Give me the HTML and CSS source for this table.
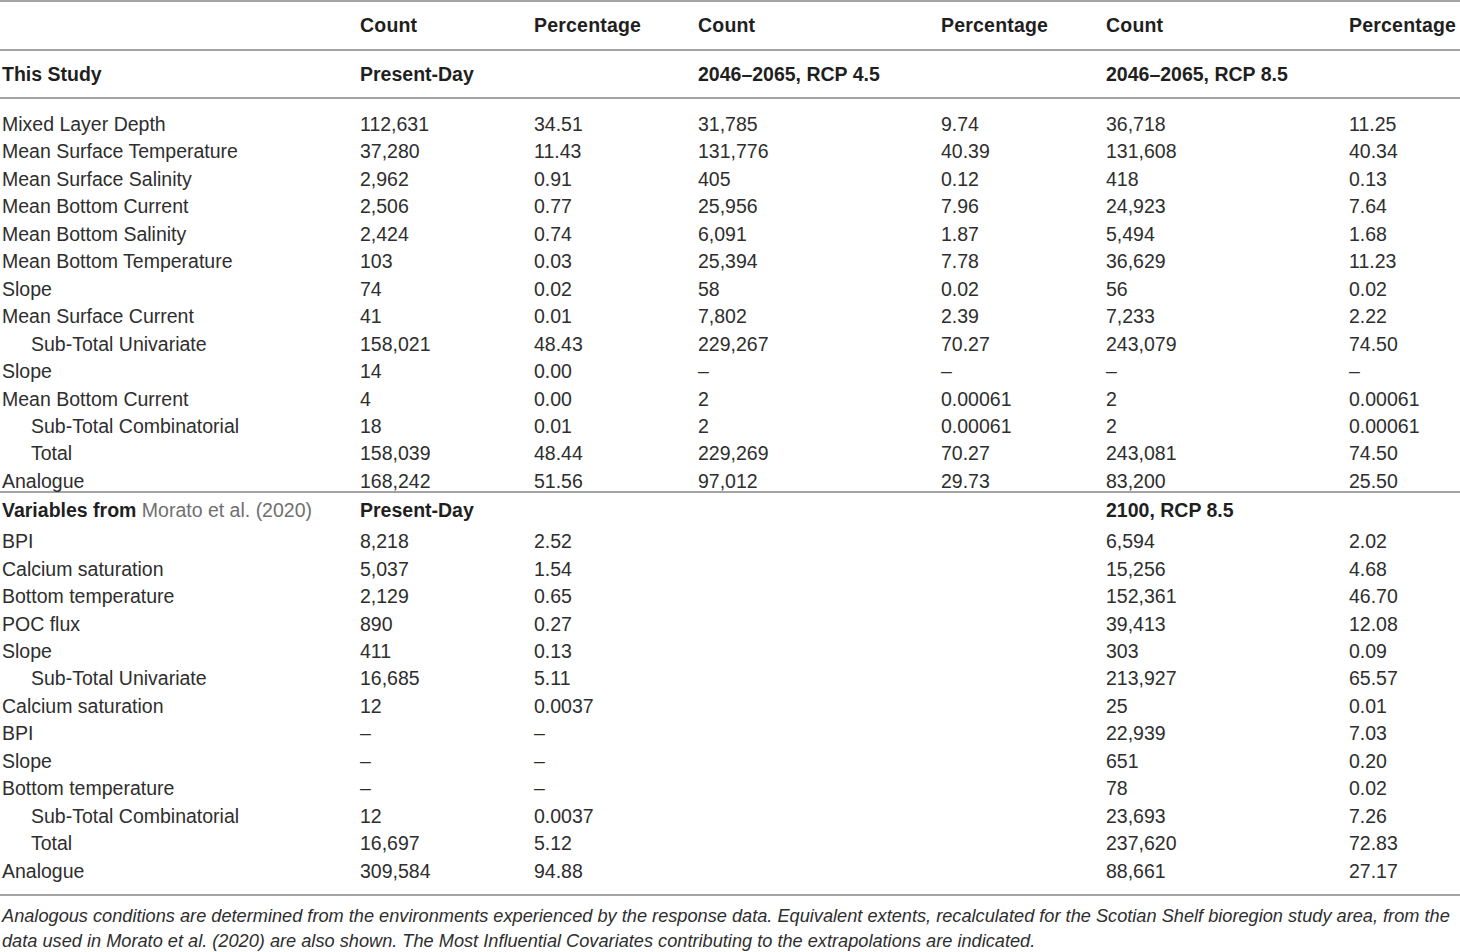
FILE: index.html
```html
<!DOCTYPE html>
<html lang="en">
<head>
<meta charset="utf-8">
<title>Extrapolation table</title>
<link rel="stylesheet" href="styles.css">
</head>
<body>
<table class="tbl">
  <colgroup>
    <col class="c0"><col class="c1"><col class="c2"><col class="c3"><col class="c4"><col class="c5"><col class="c6">
  </colgroup>
  <thead>
    <tr class="h1">
      <th></th><th>Count</th><th>Percentage</th><th>Count</th><th>Percentage</th><th>Count</th><th>Percentage</th>
    </tr>
    <tr class="h2">
      <th>This Study</th><th>Present-Day</th><th></th><th>2046–2065, RCP 4.5</th><th></th><th>2046–2065, RCP 8.5</th><th></th>
    </tr>
  </thead>
  <tbody class="sec1">
    <tr class="first"><td>Mixed Layer Depth</td><td>112,631</td><td>34.51</td><td>31,785</td><td>9.74</td><td>36,718</td><td>11.25</td></tr>
    <tr><td>Mean Surface Temperature</td><td>37,280</td><td>11.43</td><td>131,776</td><td>40.39</td><td>131,608</td><td>40.34</td></tr>
    <tr><td>Mean Surface Salinity</td><td>2,962</td><td>0.91</td><td>405</td><td>0.12</td><td>418</td><td>0.13</td></tr>
    <tr><td>Mean Bottom Current</td><td>2,506</td><td>0.77</td><td>25,956</td><td>7.96</td><td>24,923</td><td>7.64</td></tr>
    <tr><td>Mean Bottom Salinity</td><td>2,424</td><td>0.74</td><td>6,091</td><td>1.87</td><td>5,494</td><td>1.68</td></tr>
    <tr><td>Mean Bottom Temperature</td><td>103</td><td>0.03</td><td>25,394</td><td>7.78</td><td>36,629</td><td>11.23</td></tr>
    <tr><td>Slope</td><td>74</td><td>0.02</td><td>58</td><td>0.02</td><td>56</td><td>0.02</td></tr>
    <tr><td>Mean Surface Current</td><td>41</td><td>0.01</td><td>7,802</td><td>2.39</td><td>7,233</td><td>2.22</td></tr>
    <tr><td class="ind">Sub-Total Univariate</td><td>158,021</td><td>48.43</td><td>229,267</td><td>70.27</td><td>243,079</td><td>74.50</td></tr>
    <tr><td>Slope</td><td>14</td><td>0.00</td><td>–</td><td>–</td><td>–</td><td>–</td></tr>
    <tr><td>Mean Bottom Current</td><td>4</td><td>0.00</td><td>2</td><td>0.00061</td><td>2</td><td>0.00061</td></tr>
    <tr><td class="ind">Sub-Total Combinatorial</td><td>18</td><td>0.01</td><td>2</td><td>0.00061</td><td>2</td><td>0.00061</td></tr>
    <tr><td class="ind">Total</td><td>158,039</td><td>48.44</td><td>229,269</td><td>70.27</td><td>243,081</td><td>74.50</td></tr>
    <tr class="last"><td>Analogue</td><td>168,242</td><td>51.56</td><td>97,012</td><td>29.73</td><td>83,200</td><td>25.50</td></tr>
  </tbody>
  <tbody class="sec2">
    <tr class="sub"><th>Variables from <a class="ref" href="#">Morato et al. (2020)</a></th><th>Present-Day</th><th></th><th></th><th></th><th>2100, RCP 8.5</th><th></th></tr>
    <tr><td>BPI</td><td>8,218</td><td>2.52</td><td></td><td></td><td>6,594</td><td>2.02</td></tr>
    <tr><td>Calcium saturation</td><td>5,037</td><td>1.54</td><td></td><td></td><td>15,256</td><td>4.68</td></tr>
    <tr><td>Bottom temperature</td><td>2,129</td><td>0.65</td><td></td><td></td><td>152,361</td><td>46.70</td></tr>
    <tr><td>POC flux</td><td>890</td><td>0.27</td><td></td><td></td><td>39,413</td><td>12.08</td></tr>
    <tr><td>Slope</td><td>411</td><td>0.13</td><td></td><td></td><td>303</td><td>0.09</td></tr>
    <tr><td class="ind">Sub-Total Univariate</td><td>16,685</td><td>5.11</td><td></td><td></td><td>213,927</td><td>65.57</td></tr>
    <tr><td>Calcium saturation</td><td>12</td><td>0.0037</td><td></td><td></td><td>25</td><td>0.01</td></tr>
    <tr><td>BPI</td><td>–</td><td>–</td><td></td><td></td><td>22,939</td><td>7.03</td></tr>
    <tr><td>Slope</td><td>–</td><td>–</td><td></td><td></td><td>651</td><td>0.20</td></tr>
    <tr><td>Bottom temperature</td><td>–</td><td>–</td><td></td><td></td><td>78</td><td>0.02</td></tr>
    <tr><td class="ind">Sub-Total Combinatorial</td><td>12</td><td>0.0037</td><td></td><td></td><td>23,693</td><td>7.26</td></tr>
    <tr><td class="ind">Total</td><td>16,697</td><td>5.12</td><td></td><td></td><td>237,620</td><td>72.83</td></tr>
    <tr class="end"><td>Analogue</td><td>309,584</td><td>94.88</td><td></td><td></td><td>88,661</td><td>27.17</td></tr>
  </tbody>
</table>
<p class="caption">Analogous conditions are determined from the environments experienced by the response data. Equivalent extents, recalculated for the Scotian Shelf bioregion study area, from the<br>data used in Morato et al. (2020) are also shown. The Most Influential Covariates contributing to the extrapolations are indicated.</p>
</body>
</html>
```
FILE: styles.css
```css
html, body {
  margin: 0;
  padding: 0;
  background: #ffffff;
}

body {
  width: 1460px;
  font-family: "Liberation Sans", Arial, sans-serif;
  color: #2e2e2e;
  overflow: hidden;
}

.tbl {
  width: 1460px;
  table-layout: fixed;
  border-collapse: separate;
  border-spacing: 0;
  font-size: 19.5px;
}

.c0 { width: 358px; }
.c1 { width: 174px; }
.c2 { width: 164px; }
.c3 { width: 243px; }
.c4 { width: 165px; }
.c5 { width: 243px; }
.c6 { width: 113px; }

.tbl th,
.tbl td {
  padding: 0 0 0 2px;
  text-align: left;
  vertical-align: top;
  white-space: nowrap;
  overflow: visible;
}

.tbl th {
  font-weight: bold;
  color: #1f1f1f;
}

.h1 th {
  letter-spacing: 0.2px;
}

.tbl td {
  font-weight: normal;
  line-height: 27.45px;
}

.h1 th {
  border-top: 2px solid #a3a3a3;
  border-bottom: 2px solid #a3a3a3;
  line-height: 47px;
}

.h2 th {
  border-bottom: 2px solid #a3a3a3;
  line-height: 46px;
}

.sec1 .first td {
  padding-top: 12px;
}

.sec1 .last td {
  line-height: 20px;
  padding-top: 3px;
  border-bottom: 2px solid #a3a3a3;
}

.sub th {
  line-height: 35.3px;
}

.ref {
  color: #707070;
  font-weight: normal;
  text-decoration: none;
}

.ind {
  padding-left: 31px !important;
}

.sec2 .end td {
  padding-bottom: 9.3px;
  border-bottom: 2px solid #a3a3a3;
}

.caption {
  margin: 0;
  padding: 8px 0 0 2px;
  font-size: 18.2px;
  font-style: italic;
  line-height: 25px;
  white-space: nowrap;
  color: #2e2e2e;
}
```
